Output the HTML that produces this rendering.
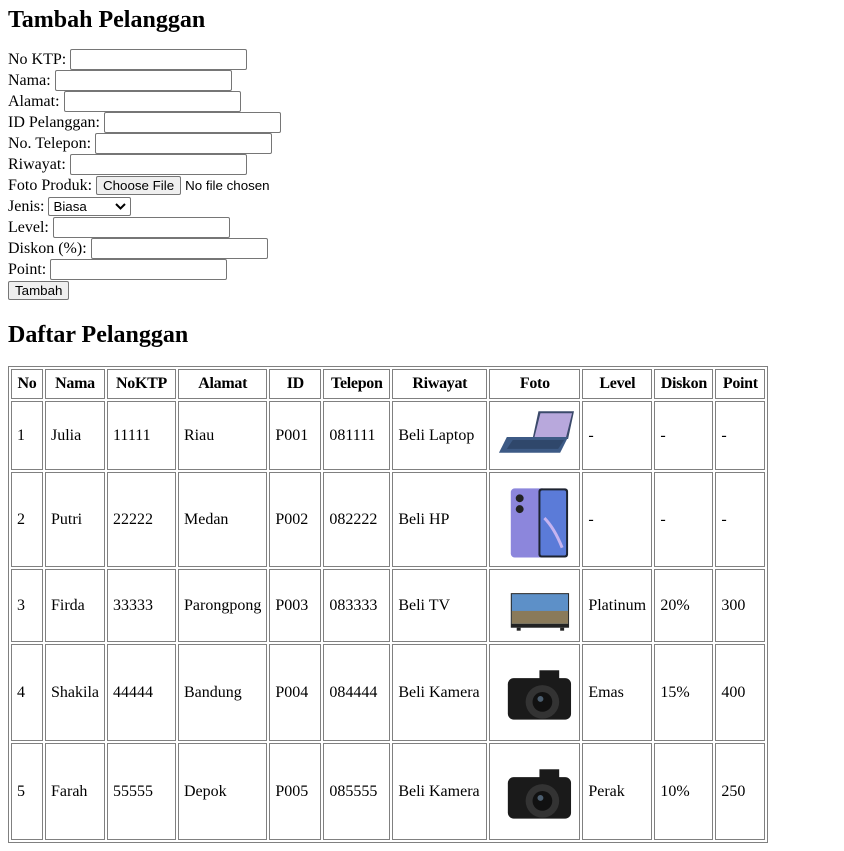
<!DOCTYPE html>
<html><head><meta charset="utf-8">
<style>
body{margin:8px;font-family:"Liberation Serif",serif;font-size:16px;color:#000;background:#fff}
h2{font-size:24px;margin:0 0 15px;line-height:28px}
h2.first{margin-top:-2px}
h2.second{margin-bottom:17px}
form{line-height:21px;margin-bottom:20px}
input[type=text]{width:171px;height:17px;padding:1px 2px;border:1px solid #767676;border-radius:2px;font:13.33px "Liberation Sans",sans-serif;margin:0;vertical-align:baseline;box-sizing:content-box}
.fbtn{display:inline-block;font:13.33px "Liberation Sans",sans-serif;border:1px solid #767676;background:#efefef;border-radius:2px;padding:1px 6px;line-height:15px}
.ftxt{font:13.33px "Liberation Sans",sans-serif}
.sel{display:inline-block;width:77px;height:17px;border:1px solid #767676;border-radius:2px;font:13.33px "Liberation Sans",sans-serif;line-height:17px;padding:0 0 0 4px;position:relative;vertical-align:top;margin-top:1px;box-sizing:content-box}
.sel svg{position:absolute;right:4px;top:5px}
button{font:13.33px "Liberation Sans",sans-serif;border:1px solid #767676;background:#efefef;border-radius:2px;padding:1px 6px;line-height:15px;margin:0}
table{border:1px solid #808080;border-spacing:2px;border-collapse:separate;table-layout:fixed}
td,th{border:1px solid #808080;padding:5px;text-align:left;white-space:nowrap;overflow:visible}
th{text-align:center;letter-spacing:-0.3px}
td svg{display:block}
</style></head><body>
<h2 class="first">Tambah Pelanggan</h2>
<form>
No KTP: <input type="text"><br>
Nama: <input type="text"><br>
Alamat: <input type="text"><br>
ID Pelanggan: <input type="text"><br>
No. Telepon: <input type="text"><br>
Riwayat: <input type="text"><br>
Foto Produk: <span class="fbtn">Choose File</span> <span class="ftxt">No file chosen</span><br>
Jenis: <span class="sel">Biasa<svg width="11" height="7" viewBox="0 0 11 7"><path d="M1 1l4.5 4.5L10 1" stroke="#000" stroke-width="2" fill="none"/></svg></span><br>
Level: <input type="text"><br>
Diskon (%): <input type="text"><br>
Point: <input type="text"><br>
<button type="button">Tambah</button>
</form>
<h2 class="second">Daftar Pelanggan</h2>
<table>
<colgroup><col style="width:32px"><col style="width:60px"><col style="width:69px"><col style="width:89px"><col style="width:52px"><col style="width:67px"><col style="width:95px"><col style="width:91px"><col style="width:70px"><col style="width:59px"><col style="width:50px"></colgroup>
<tr><th>No</th><th>Nama</th><th>NoKTP</th><th>Alamat</th><th>ID</th><th>Telepon</th><th>Riwayat</th><th>Foto</th><th>Level</th><th>Diskon</th><th>Point</th></tr>
<tr style="height:69px"><td>1</td><td>Julia</td><td>11111</td><td>Riau</td><td>P001</td><td>081111</td><td>Beli Laptop</td>
<td><svg width="79" height="57" viewBox="0 0 80 57"><polygon points="44,4 80,4 74,32 38,32" fill="#3b4a6b"/><polygon points="46,6 78,6 72,30 40,30" fill="#b8a8dc"/><polygon points="12,30 74,30 66,46 4,46" fill="#3d5a85"/><polygon points="18,33 70,33 64,42 12,42" fill="#2f476b"/></svg></td>
<td>-</td><td>-</td><td>-</td></tr>
<tr style="height:95px"><td>2</td><td>Putri</td><td>22222</td><td>Medan</td><td>P002</td><td>082222</td><td>Beli HP</td>
<td><svg width="79" height="83" viewBox="0 0 80 83"><rect x="16" y="10" width="36" height="70" rx="4" fill="#8c86dc"/><circle cx="25" cy="20" r="4" fill="#222"/><circle cx="25" cy="31" r="4" fill="#222"/><rect x="44" y="10" width="30" height="70" rx="3" fill="#1d2330"/><rect x="46" y="12" width="26" height="66" rx="2" fill="#5b7bd8"/><path d="M50 40 q10 10 18 30" stroke="#c6b4f0" stroke-width="3" fill="none"/></svg></td>
<td>-</td><td>-</td><td>-</td></tr>
<tr style="height:73px"><td>3</td><td>Firda</td><td>33333</td><td>Parongpong</td><td>P003</td><td>083333</td><td>Beli TV</td>
<td><svg width="79" height="61" viewBox="0 0 80 61"><rect x="16" y="18" width="59" height="35" fill="#222"/><rect x="17" y="19" width="57" height="30" fill="#5d90c8"/><rect x="17" y="36" width="57" height="13" fill="#8a7a5a"/><rect x="22" y="53" width="4" height="3" fill="#222"/><rect x="66" y="53" width="4" height="3" fill="#222"/></svg></td>
<td>Platinum</td><td>20%</td><td>300</td></tr>
<tr style="height:97px"><td>4</td><td>Shakila</td><td>44444</td><td>Bandung</td><td>P004</td><td>084444</td><td>Beli Kamera</td>
<td><svg width="79" height="85" viewBox="0 0 80 85"><rect x="13" y="28" width="64" height="42" rx="6" fill="#1a1a1a"/><rect x="45" y="20" width="20" height="10" fill="#1a1a1a"/><circle cx="48" cy="52" r="17" fill="#333"/><circle cx="48" cy="52" r="10" fill="#111"/><circle cx="46" cy="49" r="3" fill="#4b5d6e"/></svg></td>
<td>Emas</td><td>15%</td><td>400</td></tr>
<tr style="height:97px"><td>5</td><td>Farah</td><td>55555</td><td>Depok</td><td>P005</td><td>085555</td><td>Beli Kamera</td>
<td><svg width="79" height="85" viewBox="0 0 80 85"><rect x="13" y="28" width="64" height="42" rx="6" fill="#1a1a1a"/><rect x="45" y="20" width="20" height="10" fill="#1a1a1a"/><circle cx="48" cy="52" r="17" fill="#333"/><circle cx="48" cy="52" r="10" fill="#111"/><circle cx="46" cy="49" r="3" fill="#4b5d6e"/></svg></td>
<td>Perak</td><td>10%</td><td>250</td></tr>
</table>
</body></html>
